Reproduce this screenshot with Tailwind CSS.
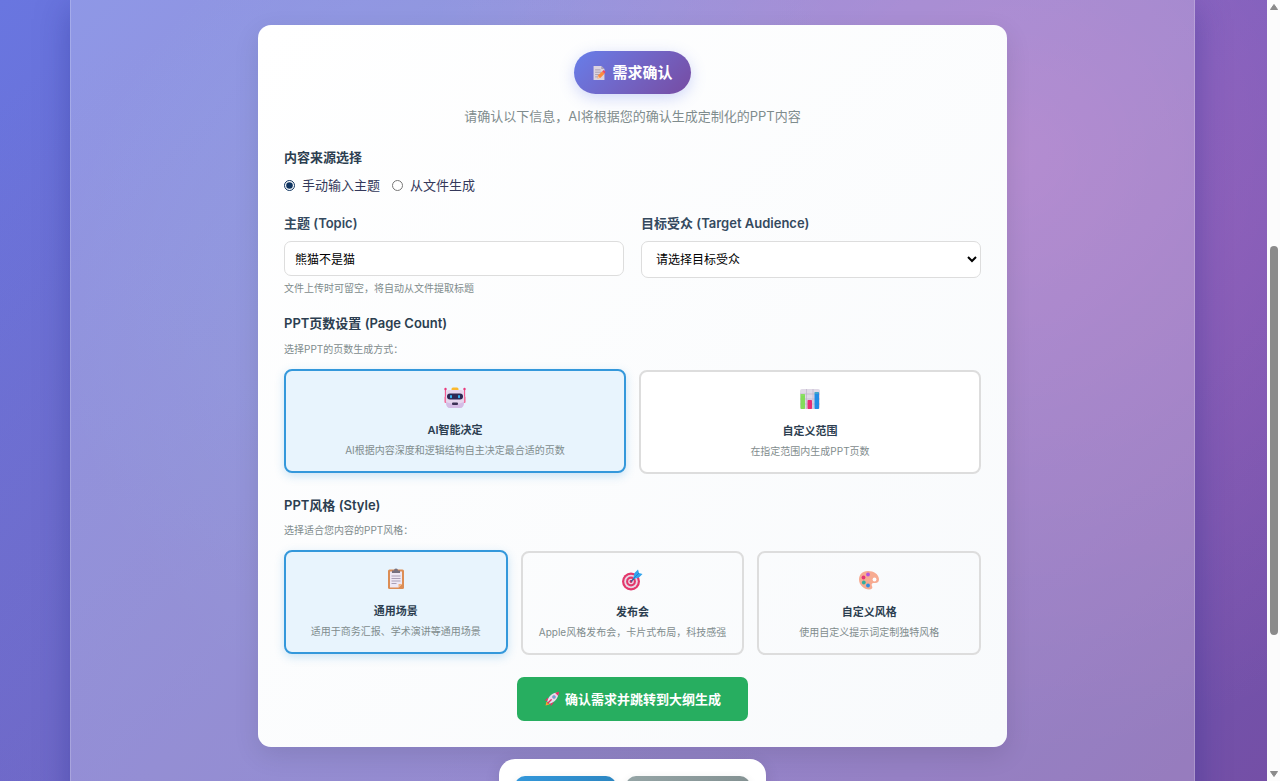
<!DOCTYPE html>
<html lang="zh-CN">
<head>
    <meta charset="UTF-8">
    <meta name="viewport" content="width=device-width, initial-scale=1.0">
    <title>需求确认</title>
    <script src="https://cdn.jsdelivr.net/npm/@tailwindcss/browser@4"></script>
</head>
<body class="h-screen overflow-hidden flex bg-white text-[13px] leading-5 text-[#2c3e50] font-['Inter','Noto_Sans_CJK_SC',sans-serif]">
    <div class="flex-1 pr-0.5 overflow-hidden bg-[radial-gradient(circle_at_20%_80%,rgba(120,119,198,0.3)_0%,transparent_50%),radial-gradient(circle_at_80%_20%,rgba(255,119,198,0.3)_0%,transparent_50%),radial-gradient(circle_at_40%_40%,rgba(120,219,255,0.2)_0%,transparent_50%),linear-gradient(135deg,#6976e0_0%,#744fa6_100%)]">
        <div class="max-w-[1125px] min-h-screen mx-auto pt-[25px] bg-white/25 border-x border-white/20 shadow-[0_8px_32px_rgba(31,38,135,0.37)]">

            <!-- Requirement form -->
            <form class="max-w-[749px] mx-auto p-[26px] rounded-[13px] bg-linear-135 from-white to-[#f8fafc] shadow-[0_8px_26px_rgba(0,0,0,0.1)]">
                <div class="flex flex-col items-center">
                    <h1 class="h-[43px] px-[18px] flex items-center gap-[6px] rounded-full bg-linear-135 from-[#667eea] to-[#764ba2] text-white text-[15px] font-bold shadow-[0_4px_15px_rgba(102,126,234,0.3)]">
                        <svg class="size-[14px]" viewBox="2 1 16 18">
                            <path d="M3 1h10l4 4v14H3z" fill="#dcd3df"/>
                            <path d="M13 1v4h4z" fill="#a99cb5"/>
                            <path d="M5 6h7M5 9h8M5 12h6M5 15h4" stroke="#a69bac" stroke-width="1.2"/>
                            <path d="M8 17l1-4 5-5 3 3-5 5z" fill="#ff8a3c"/>
                            <path d="M14 8l2-2 2.500 2.500-1.500 2.500z" fill="#ec4b63"/>
                            <path d="M8 17l1-3 2 2z" fill="#f9c99a"/>
                        </svg>
                        需求确认
                    </h1>
                    <p class="mt-3 text-[#7f8c8d]">请确认以下信息，AI将根据您的确认生成定制化的PPT内容</p>
                </div>

                <fieldset class="mt-[21px]">
                    <legend class="font-semibold">内容来源选择</legend>
                    <div class="mt-2 flex gap-3 text-[#34385a]">
                        <label class="flex items-center gap-[7px]"><input type="radio" name="source" checked class="size-[11px] accent-[#0f3460]">手动输入主题</label>
                        <label class="flex items-center gap-[7px]"><input type="radio" name="source" class="size-[11px] accent-[#0f3460]">从文件生成</label>
                    </div>
                </fieldset>

                <div class="mt-[18px] grid grid-cols-2 gap-[17px]">
                    <div>
                        <label for="topic" class="block font-semibold text-[#34495e]">主题 (Topic)</label>
                        <input id="topic" type="text" value="熊猫不是猫" class="mt-2 block w-full h-[35px] px-[10px] rounded-[7px] border border-[#dddddd] bg-white text-xs text-black">
                        <p class="mt-1 text-[10px] leading-4 text-[#7f8c8d]">文件上传时可留空，将自动从文件提取标题</p>
                    </div>
                    <div>
                        <label for="audience" class="block font-semibold text-[#34495e]">目标受众 (Target Audience)</label>
                        <select id="audience" class="mt-2 block w-full h-[37px] px-[10px] rounded-[7px] border border-[#dddddd] bg-white text-xs text-black">
                            <option>请选择目标受众</option>
                        </select>
                    </div>
                </div>

                <fieldset class="mt-[17px]">
                    <legend class="font-semibold">PPT页数设置 (Page Count)</legend>
                    <p class="mt-2 text-[10px] leading-4 text-[#7f8c8d]">选择PPT的页数生成方式：</p>
                    <div class="mt-[13px] grid grid-cols-2 gap-[13px]">
                        <label class="relative -translate-y-px flex flex-col items-center p-[13px] rounded-lg border-2 border-[#3498db] bg-[#e8f4fd] shadow-[0_3px_10px_rgba(52,152,219,0.25)]">
                            <input type="radio" name="pages" checked class="sr-only">
                            <span class="h-7 flex items-center">
                                <svg class="size-[22px]" viewBox="0 0 22 22">
                                    <path d="M1.500 2v14M20.500 2v14" stroke="#f25a92" stroke-width="1.300"/>
                                    <circle cx="1.500" cy="2" r="1.200" fill="#e8397c"/>
                                    <circle cx="20.500" cy="2" r="1.200" fill="#e8397c"/>
                                    <rect x="0.500" y="9" width="3" height="7" rx="1.500" fill="#f4729f"/>
                                    <rect x="18.500" y="9" width="3" height="7" rx="1.500" fill="#f4729f"/>
                                    <rect x="7.500" y="0.500" width="7" height="4" rx="1.500" fill="#fbb92f"/>
                                    <path d="M5 3h12q3 0 3 4v7q0 7-4 7H6q-4 0-4-7V7q0-4 3-4z" fill="#e5d6ee"/>
                                    <path d="M2 15q0 6 4 6h10q4 0 4-6-9 4-18 0z" fill="#d5bce5"/>
                                    <rect x="3" y="6.500" width="16" height="6" rx="3" fill="#2c2853"/>
                                    <rect x="6" y="8" width="2" height="3.200" rx="1" fill="#35b5f2"/>
                                    <rect x="14" y="8" width="2" height="3.200" rx="1" fill="#35b5f2"/>
                                    <rect x="8" y="15.500" width="6" height="2.500" rx="1" fill="#3b3155"/>
                                </svg>
                            </span>
                            <span class="mt-[9px] text-[11px] leading-[18px] font-semibold">AI智能决定</span>
                            <span class="mt-[3px] text-[10px] leading-4 text-[#7f8c8d]">AI根据内容深度和逻辑结构自主决定最合适的页数</span>
                        </label>
                        <label class="relative flex flex-col items-center p-[13px] rounded-lg border-2 border-[#dddddd] bg-white">
                            <input type="radio" name="pages" class="sr-only">
                            <span class="h-7 flex items-center">
                                <svg class="size-[22px]" viewBox="0 0 22 22">
                                    <rect x="1" y="1" width="20" height="20" rx="2" fill="#e0d9e6"/>
                                    <path d="M1 6h20M1 11h20M1 16h20M7.500 1v20M14 1v20" stroke="#bdb2c8" stroke-width="0.700"/>
                                    <rect x="1.500" y="6" width="4.500" height="15" rx="0.700" fill="#83dc5b"/>
                                    <rect x="8.500" y="12" width="4.500" height="9" rx="0.700" fill="#e72e75"/>
                                    <rect x="15.500" y="4" width="4.500" height="17" rx="0.700" fill="#218ce5"/>
                                    <path d="M1.500 7h4M15.500 5h4" stroke="#a0ee78" stroke-width="0.500"/>
                                </svg>
                            </span>
                            <span class="mt-[9px] text-[11px] leading-[18px] font-semibold">自定义范围</span>
                            <span class="mt-[3px] text-[10px] leading-4 text-[#7f8c8d]">在指定范围内生成PPT页数</span>
                        </label>
                    </div>
                </fieldset>

                <fieldset class="mt-[21px]">
                    <legend class="font-semibold">PPT风格 (Style)</legend>
                    <p class="mt-[7px] text-[10px] leading-4 text-[#7f8c8d]">选择适合您内容的PPT风格：</p>
                    <div class="mt-[13px] grid grid-cols-3 gap-[13px]">
                        <label class="relative -translate-y-px flex flex-col items-center p-[13px] rounded-lg border-2 border-[#3498db] bg-[#e8f4fd] shadow-[0_3px_10px_rgba(52,152,219,0.25)]">
                            <input type="radio" name="style" checked class="sr-only">
                            <span class="h-7 flex items-center">
                                <svg class="size-[22px]" viewBox="0 0 22 22">
                                    <rect x="3" y="1.500" width="16" height="19.500" rx="1.500" fill="#dc8d55"/>
                                    <path d="M5 3.500h12V16l-3.500 3.500H5z" fill="#eee8f4"/>
                                    <path d="M17 16h-3.500v3.500z" fill="#f3b27c"/>
                                    <path d="M7 5V2.500h2q0-2 2-2t2 2h2V5z" fill="#77717f"/>
                                    <path d="M6.500 8h9M6.500 10.500h9M6.500 13h9M6.500 15.500h5" stroke="#aaa0b6" stroke-width="1"/>
                                </svg>
                            </span>
                            <span class="mt-[9px] text-[11px] leading-[18px] font-semibold">通用场景</span>
                            <span class="mt-[3px] text-[10px] leading-4 text-[#7f8c8d]">适用于商务汇报、学术演讲等通用场景</span>
                        </label>
                        <label class="relative flex flex-col items-center p-[13px] rounded-lg border-2 border-[#dddddd]">
                            <input type="radio" name="style" class="sr-only">
                            <span class="h-7 flex items-center">
                                <svg class="size-[22px]" viewBox="0 0 22 22">
                                    <circle cx="10" cy="12.500" r="9" fill="#e3376b"/>
                                    <circle cx="10" cy="12.500" r="6.800" fill="#e9d7e6"/>
                                    <circle cx="10" cy="12.500" r="4.900" fill="#e3376b"/>
                                    <circle cx="10" cy="12.500" r="2.800" fill="#e9d7e6"/>
                                    <circle cx="10" cy="12.500" r="1.400" fill="#d32660"/>
                                    <path d="M10 12.500l6-6" stroke="#365f92" stroke-width="1.200"/>
                                    <path d="M12 10l1.500-6L17 .5l1 3.500 3.500 1-3.500 3.500z" fill="#31a4ee"/>
                                    <path d="M12 10l6-6" stroke="#187bc9" stroke-width="0.800"/>
                                </svg>
                            </span>
                            <span class="mt-[9px] text-[11px] leading-[18px] font-semibold">发布会</span>
                            <span class="mt-[3px] text-[10px] leading-4 text-[#7f8c8d]">Apple风格发布会，卡片式布局，科技感强</span>
                        </label>
                        <label class="relative flex flex-col items-center p-[13px] rounded-lg border-2 border-[#dddddd]">
                            <input type="radio" name="style" class="sr-only">
                            <span class="h-7 flex items-center">
                                <svg class="size-[22px]" viewBox="0 0 22 22">
                                    <path d="M10 2C4 2 1 6 1 10.500 1 16 6 20.500 11 20.500c3 0 4-1.500 3-3.500-1-2.500.5-3 3-3 3 0 4-1.500 4-4C20.500 5 16 2 10 2z" fill="#f7ab91"/>
                                    <circle cx="16.500" cy="10.500" r="1.900" fill="#fdfdfe"/>
                                    <circle cx="10" cy="5.500" r="1.900" fill="#b552df"/>
                                    <circle cx="5.500" cy="8.500" r="1.900" fill="#e53575"/>
                                    <circle cx="5.800" cy="13.500" r="1.900" fill="#31af9d"/>
                                    <circle cx="10" cy="16.500" r="1.900" fill="#338de0"/>
                                </svg>
                            </span>
                            <span class="mt-[9px] text-[11px] leading-[18px] font-semibold">自定义风格</span>
                            <span class="mt-[3px] text-[10px] leading-4 text-[#7f8c8d]">使用自定义提示词定制独特风格</span>
                        </label>
                    </div>
                </fieldset>

                <button type="button" class="mt-[22px] mx-auto h-11 px-[27px] flex items-center gap-[5px] rounded-[7px] bg-[#27ae60] text-white font-bold">
                    <svg class="size-4" viewBox="0 0 20 20">
                        <path d="M5 8L1 12l4 .5zM8 15l.5 4 4-5z" fill="#e53365"/>
                        <path d="M2 18l1-5 4 4z" fill="#ff9d2e"/>
                        <path d="M4 13C6 6 11 2 18 2c0 7-4 12-11 14z" fill="#e6dced"/>
                        <path d="M14 2.500q2-.8 5-1.500-.5 3-1.500 5z" fill="#e53365"/>
                        <circle cx="12.500" cy="7.500" r="2.200" fill="#8a7ba5"/>
                        <circle cx="12.500" cy="7.500" r="1.300" fill="#55b3ef"/>
                        <path d="M5 15l4-4" stroke="#e53365" stroke-width="1.800" stroke-linecap="round"/>
                    </svg>
                    确认需求并跳转到大纲生成
                </button>
            </form>

            <!-- Action bar -->
            <div class="mt-3 mx-auto w-fit px-4 py-[17px] flex gap-[10px] rounded-[16px] bg-white shadow-[0_4px_16px_rgba(0,0,0,0.1)]">
                <button type="button" aria-label="返回" class="w-[101px] h-10 rounded-[10px] bg-linear-135 from-[#3498db] to-[#2980b9] shadow-[0_3px_10px_rgba(0,0,0,0.1)]"></button>
                <button type="button" aria-label="重置" class="w-[124px] h-10 rounded-[10px] bg-linear-135 from-[#95a5a6] to-[#7f8c8d] shadow-[0_3px_10px_rgba(0,0,0,0.1)]"></button>
            </div>
        </div>
    </div>

    <!-- Scrollbar -->
    <div class="w-[13px] flex flex-col items-center justify-between py-[3px] bg-[#fcfcfc]">
        <svg class="w-2 h-[7px]" viewBox="0 0 8 7"><path d="M4 1.500L7.500 6.500h-7z" fill="#8b8b8b" stroke="#8b8b8b" stroke-linejoin="round"/></svg>
        <div class="flex-1 w-2 flex flex-col">
            <div class="grow-[236]"></div>
            <div class="grow-[389] rounded-full bg-[#8b8b8b]"></div>
            <div class="grow-[136]"></div>
        </div>
        <svg class="w-2 h-[7px]" viewBox="0 0 8 7"><path d="M4 5.500L7.500.5h-7z" fill="#8b8b8b" stroke="#8b8b8b" stroke-linejoin="round"/></svg>
    </div>
</body>
</html>
